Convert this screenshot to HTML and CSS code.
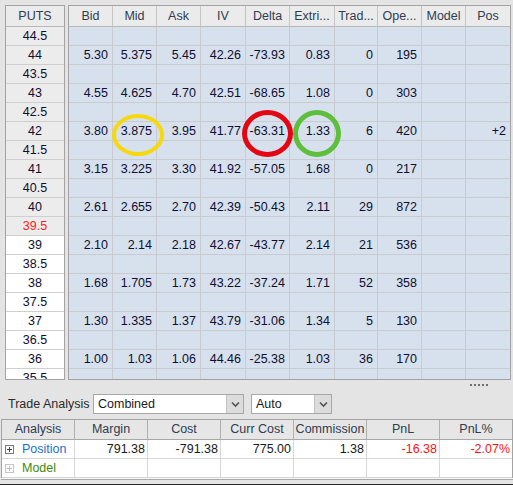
FILE: index.html
```
<!DOCTYPE html>
<html>
<head>
<meta charset="utf-8">
<link rel="stylesheet" href="styles.css">
</head>
<body>
<div class="grids">
  <div class="strikes">
    <div class="hd">PUTS</div>
    <div class="itm">44.5</div>
    <div class="itm">44</div>
    <div class="itm">43.5</div>
    <div class="itm">43</div>
    <div class="itm">42.5</div>
    <div class="itm">42</div>
    <div class="itm">41.5</div>
    <div class="itm">41</div>
    <div class="itm">40.5</div>
    <div class="itm">40</div>
    <div class="itm atm">39.5</div>
    <div>39</div>
    <div>38.5</div>
    <div>38</div>
    <div>37.5</div>
    <div>37</div>
    <div>36.5</div>
    <div>36</div>
    <div>35.5</div>
  </div>
  <div class="chain">
    <div class="chain-grid">
      <div class="hd">Bid</div><div class="hd">Mid</div><div class="hd">Ask</div><div class="hd">IV</div><div class="hd">Delta</div><div class="hd">Extri...</div><div class="hd">Trad...</div><div class="hd">Ope...</div><div class="hd">Model</div><div class="hd">Pos</div>
      <div></div><div></div><div></div><div></div><div></div><div></div><div></div><div></div><div></div><div></div>
      <div>5.30</div><div>5.375</div><div>5.45</div><div>42.26</div><div>-73.93</div><div>0.83</div><div>0</div><div>195</div><div></div><div></div>
      <div></div><div></div><div></div><div></div><div></div><div></div><div></div><div></div><div></div><div></div>
      <div>4.55</div><div>4.625</div><div>4.70</div><div>42.51</div><div>-68.65</div><div>1.08</div><div>0</div><div>303</div><div></div><div></div>
      <div></div><div></div><div></div><div></div><div></div><div></div><div></div><div></div><div></div><div></div>
      <div>3.80</div><div>3.875</div><div>3.95</div><div>41.77</div><div>-63.31</div><div>1.33</div><div>6</div><div>420</div><div></div><div>+2</div>
      <div></div><div></div><div></div><div></div><div></div><div></div><div></div><div></div><div></div><div></div>
      <div>3.15</div><div>3.225</div><div>3.30</div><div>41.92</div><div>-57.05</div><div>1.68</div><div>0</div><div>217</div><div></div><div></div>
      <div></div><div></div><div></div><div></div><div></div><div></div><div></div><div></div><div></div><div></div>
      <div>2.61</div><div>2.655</div><div>2.70</div><div>42.39</div><div>-50.43</div><div>2.11</div><div>29</div><div>872</div><div></div><div></div>
      <div></div><div></div><div></div><div></div><div></div><div></div><div></div><div></div><div></div><div></div>
      <div>2.10</div><div>2.14</div><div>2.18</div><div>42.67</div><div>-43.77</div><div>2.14</div><div>21</div><div>536</div><div></div><div></div>
      <div></div><div></div><div></div><div></div><div></div><div></div><div></div><div></div><div></div><div></div>
      <div>1.68</div><div>1.705</div><div>1.73</div><div>43.22</div><div>-37.24</div><div>1.71</div><div>52</div><div>358</div><div></div><div></div>
      <div></div><div></div><div></div><div></div><div></div><div></div><div></div><div></div><div></div><div></div>
      <div>1.30</div><div>1.335</div><div>1.37</div><div>43.79</div><div>-31.06</div><div>1.34</div><div>5</div><div>130</div><div></div><div></div>
      <div></div><div></div><div></div><div></div><div></div><div></div><div></div><div></div><div></div><div></div>
      <div>1.00</div><div>1.03</div><div>1.06</div><div>44.46</div><div>-25.38</div><div>1.03</div><div>36</div><div>170</div><div></div><div></div>
      <div></div><div></div><div></div><div></div><div></div><div></div><div></div><div></div><div></div><div></div>
    </div>
    <div class="ring ring-yellow"></div>
    <div class="ring ring-red"></div>
    <div class="ring ring-green"></div>
  </div>
</div>

<div class="grip"><span></span><span></span><span></span><span></span><span></span></div>

<div class="controls">
  <span class="label">Trade Analysis</span>
  <div class="select sel-combined">
    <span class="sel-text">Combined</span>
    <span class="sel-btn"><svg width="9" height="7" viewBox="0 0 9 7"><path d="M1 1.5 L4.5 5 L8 1.5" fill="none" stroke="#555" stroke-width="1.6"/></svg></span>
  </div>
  <div class="select sel-auto">
    <span class="sel-text">Auto</span>
    <span class="sel-btn"><svg width="9" height="7" viewBox="0 0 9 7"><path d="M1 1.5 L4.5 5 L8 1.5" fill="none" stroke="#555" stroke-width="1.6"/></svg></span>
  </div>
</div>

<div class="analysis">
  <div class="ah">Analysis</div><div class="ah">Margin</div><div class="ah">Cost</div><div class="ah">Curr Cost</div><div class="ah">Commission</div><div class="ah">PnL</div><div class="ah">PnL%</div>
  <div class="name"><span class="expander"></span><span class="pos-label">Position</span></div><div class="num">791.38</div><div class="num">-791.38</div><div class="num">775.00</div><div class="num">1.38</div><div class="num neg">-16.38</div><div class="num neg">-2.07%</div>
  <div class="name"><span class="expander dim"></span><span class="model-label">Model</span></div><div></div><div></div><div></div><div></div><div></div><div></div>
</div>
<div class="bottom-edge"></div>
<div class="statusbar"></div>
</body>
</html>
```

FILE: styles.css
```
* { box-sizing: border-box; }

body {
  margin: 0;
  height: 485px;
  overflow: hidden;
  background: #e4e4e4;
  font-family: "Liberation Sans", Arial, sans-serif;
  font-size: 12px;
  color: #0e0e30;
}

.grids {
  display: flex;
  gap: 3px;
  padding: 5px 0 0 5px;
  height: 380px;
}

.strikes {
  width: 60px;
  height: 375px;
  border: 1px solid #a3a3a3;
  overflow: hidden;
  display: grid;
  grid-template-columns: 58px;
  grid-template-rows: 21px;
  grid-auto-rows: 19px;
  background: #ffffff;
}

.strikes > div {
  border-bottom: 1px solid #cfcfcf;
  text-align: center;
  line-height: 18px;
  font-size: 12.5px;
}

.strikes > .itm { background: #ececec; }
.strikes > .atm { color: #ff2020; }

.hd {
  background: #ebebeb;
  color: #2e3d52;
  line-height: 20px !important;
  text-align: center !important;
  border-bottom: 1px solid #b8b8b8 !important;
  padding: 0 !important;
  font-size: 12.5px;
}

.chain {
  position: relative;
  width: 443px;
  height: 375px;
  border: 1px solid #a3a3a3;
  overflow: hidden;
  background: #d7e1ed;
}

.chain-grid {
  display: grid;
  grid-template-columns: 44px 44px 44px 45px 44px 45px 43px 44px 44px 44px;
  grid-template-rows: 21px;
  grid-auto-rows: 19px;
}

.chain-grid > div {
  border-right: 1px solid #c9cbcf;
  border-bottom: 1px solid #c9cbcf;
  text-align: right;
  padding-right: 4px;
  line-height: 18px;
  font-size: 12.5px;
  white-space: nowrap;
}

.chain-grid > .hd {
  border-right: 1px solid #c4c4c4;
}

.chain-grid > div:nth-child(10n) {
  border-right: none;
}

.ring {
  position: absolute;
  border-radius: 50%;
}

.ring-yellow {
  left: 43px;
  top: 108px;
  width: 52px;
  height: 42px;
  border: 4px solid #f7d80c;
}

.ring-red {
  left: 173px;
  top: 104px;
  width: 51px;
  height: 47px;
  border: 5px solid #e30613;
}

.ring-green {
  left: 224px;
  top: 104px;
  width: 48px;
  height: 47px;
  border: 5px solid #5dbf3c;
}

.grip {
  display: flex;
  justify-content: flex-end;
  gap: 2px;
  padding-right: 25px;
  height: 2px;
  margin-top: 4px;
}

.grip span {
  width: 2px;
  height: 2px;
  background: #6e6e6e;
}

.controls {
  display: flex;
  align-items: center;
  margin-top: 8px;
  padding-left: 8px;
  height: 20px;
}

.label {
  width: 85px;
  color: #2a2a2a;
  font-size: 12.5px;
}

.select {
  display: flex;
  height: 20px;
  border: 1px solid #a8a8a8;
  background: #ffffff;
}

.sel-combined { width: 151px; }
.sel-auto { width: 81px; margin-left: 7px; }

.sel-text {
  flex: 1;
  padding-left: 4px;
  line-height: 18px;
  color: #1a1a1a;
  font-size: 12.5px;
}

.sel-btn {
  width: 17px;
  border-left: 1px solid #c4c4c4;
  background: #dcdcdc;
  display: flex;
  align-items: center;
  justify-content: center;
}

.analysis {
  margin: 5px 0 0 1px;
  width: 512px;
  border: 1px solid #a3a3a3;
  border-bottom: none;
  display: grid;
  grid-template-columns: 73px 73px 73px 73px 73px 73px 72px;
  grid-template-rows: 20px;
  grid-auto-rows: 19px;
  background: #ffffff;
}

.analysis > div {
  border-right: 1px solid #d6d6d6;
  border-bottom: 1px solid #d6d6d6;
  line-height: 18px;
  font-size: 12.5px;
  white-space: nowrap;
}

.analysis > div:nth-child(7n) { border-right: none; }

.analysis > .ah {
  background: #e6e6e6;
  color: #2e3d52;
  text-align: center;
  line-height: 19px;
  border-right: 1px solid #b0b0b0;
  border-bottom: 1px solid #a8a8a8;
}

.analysis > .ah:nth-child(7n) { border-right: none; }

.analysis > .num {
  text-align: right;
  padding-right: 2px;
  color: #1a1a1a;
}

.analysis > .neg { color: #ff1010; }

.name {
  display: flex;
  align-items: center;
  padding-left: 3px;
}

.expander {
  position: relative;
  width: 9px;
  height: 9px;
  border: 1px solid #7a7a7a;
  margin-right: 8px;
  background: #fff;
}

.expander::before,
.expander::after {
  content: "";
  position: absolute;
  background: #444;
}

.expander::before { left: 1px; top: 3px; width: 5px; height: 1px; }
.expander::after { left: 3px; top: 1px; width: 1px; height: 5px; }

.expander.dim { border-color: #c4c4c4; }
.expander.dim::before,
.expander.dim::after { background: #bdbdbd; }

.pos-label { color: #1b6fd6; }
.model-label { color: #3c8a0c; }

.bottom-edge {
  margin-left: 1px;
  width: 512px;
  height: 2px;
  background: #f6f6f6;
  border-bottom: 1px solid #a8a8a8;
}

.statusbar {
  margin-top: 4px;
  height: 4px;
  background: #2b2b2b;
}
```
